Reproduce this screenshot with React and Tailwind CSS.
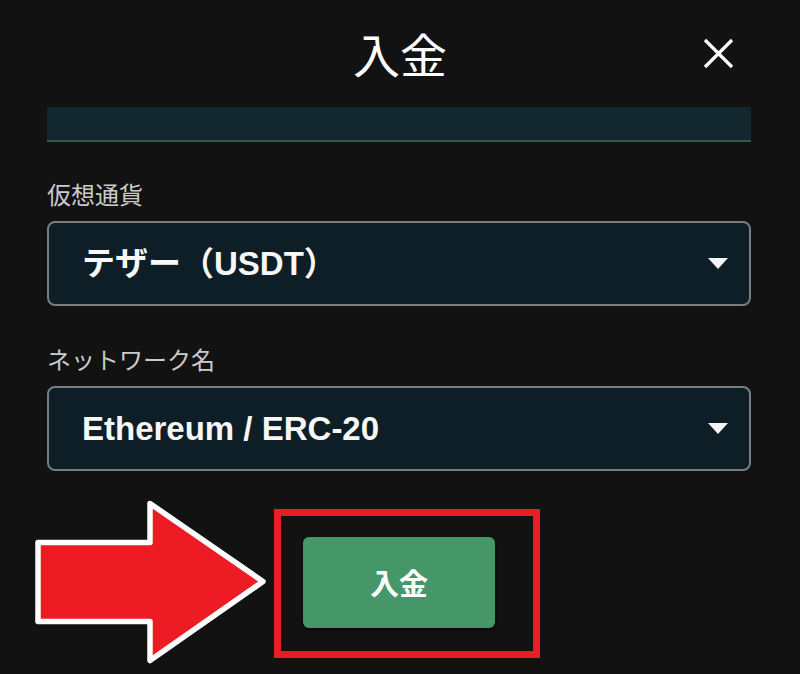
import React from 'react';

const jp = { fontFamily: '"Noto Sans CJK JP", "Noto Sans", sans-serif' };
const mixed = { fontFamily: '"Liberation Sans", "Noto Sans CJK JP", sans-serif' };

function CaretDown() {
  return (
    <svg width="20" height="11" viewBox="0 0 20 11">
      <polygon points="0,0 20,0 10,11" fill="#f4f4f4" />
    </svg>
  );
}

function SelectBox({ value }) {
  return (
    <div className="h-[85px] border-2 border-[#767e84] rounded-[8px] bg-[#0e1e26] flex items-center justify-between pl-[33px] pr-[21px]">
      <span className="text-[33px] font-bold text-[#f7f7f5] leading-none" style={mixed}>
        {value}
      </span>
      <CaretDown />
    </div>
  );
}

function BigArrow() {
  return (
    <svg width="234" height="170" viewBox="0 0 234 170">
      <polygon
        points="3,44.5 115,44.5 115,5.5 228,83.5 115,162.5 115,123.5 3,123.5"
        fill="#ed1c24"
        stroke="#ffffff"
        strokeWidth="5.5"
        strokeLinejoin="round"
      />
    </svg>
  );
}

export default function App() {
  return (
    <div className="w-[800px] h-[674px] bg-[#121212] overflow-hidden text-white" style={jp}>
      <header className="h-[107px] grid grid-cols-[1fr_auto_1fr] items-center">
        <div />
        <h1 className="text-[47px] font-normal leading-none pb-[2px]">入金</h1>
        <div className="flex justify-end pr-[66px]">
          <svg width="31" height="31" viewBox="0 0 31 31">
            <path d="M2 2 L29 29 M29 2 L2 29" stroke="#ffffff" strokeWidth="3.2" />
          </svg>
        </div>
      </header>

      <div className="pl-[47px] pr-[49px]">
        <div className="h-[35px] bg-[#13272e] border-b-2 border-[#2e5c4a]" />

        <label className="block mt-[40px] mb-[15px] text-[24px] leading-none text-[#cbcbcb]">仮想通貨</label>
        <SelectBox value="テザー（USDT）" />

        <label className="block mt-[41px] mb-[15px] text-[24px] leading-none text-[#cbcbcb]">ネットワーク名</label>
        <SelectBox value="Ethereum / ERC-20" />
      </div>

      <div className="flex items-center gap-[5px] pl-[35px] mt-[27px]">
        <BigArrow />
        <div className="w-[266px] h-[149px] border-[7px] border-[#ec1c24] pl-[22px] pt-[21px]">
          <button className="w-[192px] h-[91px] rounded-[6px] bg-[#45976a] shadow-[0_2px_3px_rgba(0,0,0,0.5)] flex items-center justify-center text-[29px] font-bold text-white leading-none">
            入金
          </button>
        </div>
      </div>
    </div>
  );
}
